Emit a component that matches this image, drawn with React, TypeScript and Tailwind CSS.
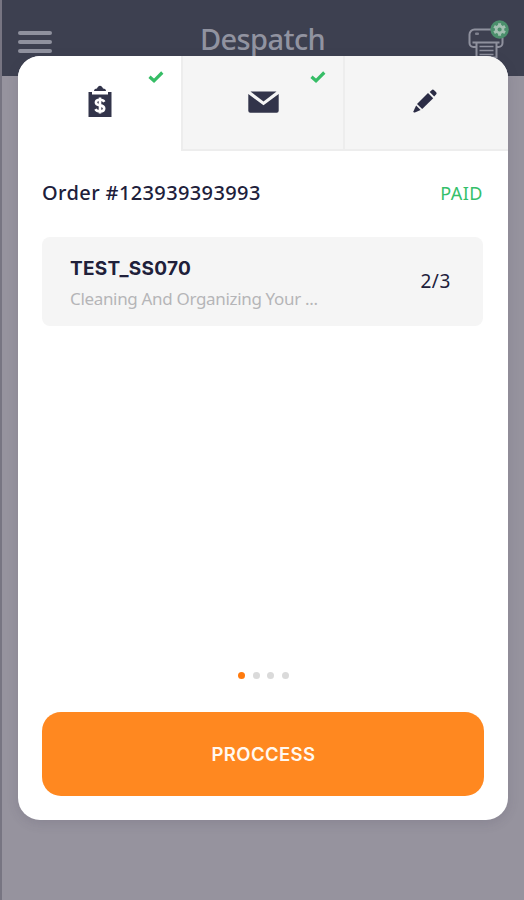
import React, { useState } from 'react'

const tabs = [
  { name: 'Payment', done: true },
  { name: 'Message', done: true },
  { name: 'Edit', done: false },
]

const order = {
  number: '123939393993',
  status: 'PAID',
  items: [
    {
      sku: 'TEST_SS070',
      title: 'Cleaning And Organizing Your ...',
      count: '2/3',
    },
  ],
}

const ClipboardIcon = () => (
  <svg width="24" height="32" viewBox="0 0 24 32" className="mb-[5px] block">
    <path
      d="M.5 7H4v2.500h16V7h3.500v25H.5z"
      fill="#32344a"
    />
    <path
      d="M6 6C6 4.500 7 3.600 9 3.400C9.800 1.800 10.700 .8 12 .8C13.300 .8 14.200 1.800 15 3.400C17 3.600 18 4.500 18 6z"
      fill="#32344a"
    />
    <path
      d="M16.300 16.800C15.600 15.400 14 14.800 12 14.800C9.500 14.800 7.900 15.800 7.900 17.500C7.900 19.500 9.800 20 12 20.400C14.400 20.800 16.200 21.500 16.200 23.500C16.200 25.300 14.500 26.400 12 26.400C9.700 26.400 8.200 25.600 7.400 24.200M12 12.500v16"
      fill="none"
      stroke="#fff"
      strokeWidth="2.600"
    />
  </svg>
)

const MailIcon = () => (
  <svg width="31" height="22" viewBox="0 0 31 22" className="mb-0.5 block">
    <path d="M2.500.5h26L15.500 10.500z" fill="#32344a" />
    <path
      d="M.3 3L15.500 14.200L30.700 3v16.700a2 2 0 0 1-2 2H2.300a2 2 0 0 1-2-2z"
      fill="#32344a"
    />
  </svg>
)

const PencilIcon = () => (
  <svg width="24" height="24" viewBox="0 0 24 24" className="mr-1 mb-[3px] block">
    <g fill="#2b2c45">
      <path d="M16.700 3L18.600 1.200a1.800 1.800 0 0 1 2.500 0L23 3.100a1.800 1.800 0 0 1 0 2.500L21.200 7.500z" />
      <path d="M15 4L20.200 9.200L9.200 20.100L4 14.900z" />
      <path d="M3.100 16.400L7.600 20.900L1.900 23.500Q.2 23.900.5 22.200z" />
    </g>
  </svg>
)

const CheckIcon = () => (
  <svg width="16" height="12" viewBox="0 0 16 12" className="block">
    <path
      d="M1.500 5.800L6 9.800L14.300 1.500"
      fill="none"
      stroke="#36bd66"
      strokeWidth="3.200"
    />
  </svg>
)

const PrinterIcon = () => (
  <svg width="42" height="40" viewBox="0 0 42 40" className="block">
    <g fill="none" stroke="#8f919e" strokeWidth="2">
      <path d="M8 27H5.500a4 4 0 0 1-4-4V14.500a5 5 0 0 1 5-5H30M34.500 18v5a4 4 0 0 1-4 4H28" />
      <path d="M4.500 22.500H31.500M8.500 22.500V37.500H28.500V22.500" />
      <path d="M11.500 26.500H25.500M11.500 30.500H25.500M11.500 34.500H25.500" strokeWidth="1.600" />
    </g>
    <rect x="7" y="12.500" width="4" height="2.500" rx="1" fill="#7e808e" />
    <circle cx="31.600" cy="9.500" r="9.200" fill="#4b8f6c" />
    <g stroke="#a3c0b2" strokeWidth="3">
      <path d="M31.600 3.200v2.800M31.600 13v2.800M37.060 6.350L34.630 7.750M28.570 11.250L26.140 12.650M26.140 6.350L28.570 7.750M34.630 11.250L37.060 12.650" />
      <circle cx="31.600" cy="9.500" r="3.400" fill="none" strokeWidth="2.600" />
    </g>
  </svg>
)

const icons = [<ClipboardIcon />, <MailIcon />, <PencilIcon />]

export default function App() {
  const [page, setPage] = useState(0)

  return (
    <div className="h-[900px] w-full overflow-hidden border-l-2 border-[#777582] bg-[#96939e] font-['Noto_Sans',sans-serif]">
      <header className="-ml-0.5 grid h-[76px] grid-cols-[1fr_auto_1fr] border-l-2 border-[#34364a] bg-[#3d4050] pr-[14px] pl-4">
        <div className="flex flex-col gap-[5px] pt-[31px]">
          <span className="h-1 w-[34px] rounded-full bg-[#8f919e]" />
          <span className="h-1 w-[34px] rounded-full bg-[#8f919e]" />
          <span className="h-1 w-[34px] rounded-full bg-[#8f919e]" />
        </div>
        <h1 className="pt-[19px] pr-[3px] text-[29px] leading-10 font-medium tracking-[-0.6px] text-[#9193a0]">
          Despatch
        </h1>
        <div className="flex justify-end pt-5">
          <PrinterIcon />
        </div>
      </header>

      <main className="relative -mt-5 ml-4 flex h-[764px] w-[490px] flex-col overflow-hidden rounded-[22px] bg-white shadow-[0_3px_12px_rgba(60,55,80,0.15)]">
        <nav className="grid h-[95px] shrink-0 grid-cols-[163px_162px_165px]">
          {tabs.map((tab, i) => (
            <button
              key={tab.name}
              aria-label={tab.name}
              className={
                i === 0
                  ? 'relative flex items-center justify-center bg-white'
                  : 'relative flex items-center justify-center border-b-2 border-l-2 border-[#ededed] bg-[#f5f5f5]'
              }
            >
              {icons[i]}
              {tab.done && (
                <span className="absolute top-[15px] right-[17px]">
                  <CheckIcon />
                </span>
              )}
            </button>
          ))}
        </nav>

        <section className="pr-[25px] pl-6 pt-[26px]">
          <div className="flex items-center justify-between leading-8">
            <h2 className="text-[20px] leading-8 font-medium tracking-[0.38px] text-[#20203a]">
              Order #{order.number}
            </h2>
            <span className="text-[18px] tracking-[0.5px] text-[#35c06a]">
              {order.status}
            </span>
          </div>

          {order.items.map((item) => (
            <div
              key={item.sku}
              className="mt-7 flex h-[89px] items-center justify-between rounded-lg bg-[#f5f5f5] pr-8 pl-7"
            >
              <div className="pt-[5px]">
                <p className="font-['Inter',sans-serif] text-[19px] leading-[30px] font-bold tracking-[0.3px] text-[#20203a]">
                  {item.sku}
                </p>
                <p className="text-[17px] leading-[30px] tracking-[-0.33px] text-[#b5b5b8]">
                  {item.title}
                </p>
              </div>
              <span className="text-[19px] tracking-[0.6px] text-[#20203a]">
                {item.count}
              </span>
            </div>
          ))}
        </section>

        <footer className="mt-auto px-6 pb-6">
          <div className="flex justify-center gap-[7.600px] pb-[33px] pl-px">
            {[0, 1, 2, 3].map((n) => (
              <button
                key={n}
                aria-label={`${n + 1}`}
                onClick={() => setPage(n)}
                className={
                  n === page
                    ? 'size-[7px] rounded-full bg-[#ff7a0d]'
                    : 'size-[7px] rounded-full bg-[#dadada]'
                }
              />
            ))}
          </div>
          <button className="h-[84px] w-full rounded-[19px] bg-[#ff8820] pt-0.5 pl-px font-['Inter',sans-serif] text-[18.500px] font-semibold tracking-[0.4px] text-[#fff8f0]">
            PROCCESS
          </button>
        </footer>
      </main>
    </div>
  )
}
